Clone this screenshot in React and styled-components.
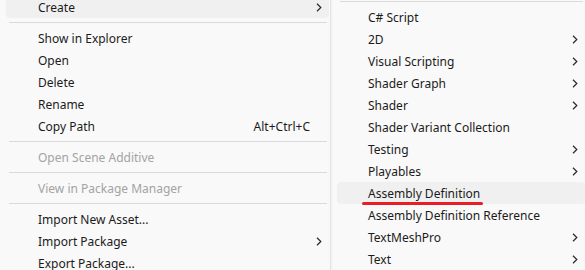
import React from 'react';
import styled, { createGlobalStyle } from 'styled-components';

const GlobalStyle = createGlobalStyle`
  html, body {
    margin: 0;
    padding: 0;
    background: #f9f9f9;
  }
  body {
    font-family: "Noto Sans", "Segoe UI", sans-serif;
    font-size: 12px;
    color: #1b1b1b;
  }
`;

const Screen = styled.div`
  width: 585px;
  height: 270px;
  overflow: hidden;
  display: flex;
  align-items: flex-start;
  background: #f9f9f9;
`;

const Menu = styled.div`
  flex: ${p => (p.$grow ? '1' : 'none')};
  width: ${p => (p.$width ? `${p.$width}px` : 'auto')};
  min-height: 280px;
  margin-top: ${p => p.$offset}px;
  padding-left: 6px;
  padding-right: ${p => p.$padRight}px;
  border-right: ${p => (p.$border ? '1px solid #e3e3e3' : 'none')};
  box-shadow: ${p => (p.$border ? '1px 0 2px rgba(0,0,0,0.04)' : 'none')};
  display: flex;
  flex-direction: column;
  box-sizing: border-box;
`;

const Row = styled.div`
  position: relative;
  flex-shrink: 0;
  height: 22px;
  display: flex;
  align-items: center;
  padding-left: ${p => p.$indent}px;
  padding-right: 7px;
  border-radius: 4px;
  background: ${p => (p.$active ? '#f0f0f0' : 'transparent')};
  color: ${p => (p.$disabled ? '#a3a3a3' : '#1b1b1b')};
  white-space: nowrap;
`;

const Label = styled.span`
  position: relative;
  flex: 1;
`;

const Shortcut = styled.span`
  margin-right: 12px;
`;

const Separator = styled.div`
  flex-shrink: 0;
  height: 1px;
  margin: 4px 2px 4px 3px;
  background: #dadada;
`;

const Mark = styled.span`
  position: absolute;
  left: -6px;
  top: 17px;
  width: 121px;
  height: 3px;
  border-radius: 2px;
  background: #e81d25;
`;

const Chevron = () => (
  <svg width="6" height="9" viewBox="0 0 6 9">
    <polyline points="1,0.8 4.8,4.5 1,8.2" fill="none" stroke="#2a2a2a" strokeWidth="1.2" />
  </svg>
);

const leftItems = [
  { label: 'Create', sub: true, active: true },
  { sep: true },
  { label: 'Show in Explorer' },
  { label: 'Open' },
  { label: 'Delete' },
  { label: 'Rename' },
  { label: 'Copy Path', shortcut: 'Alt+Ctrl+C' },
  { sep: true },
  { label: 'Open Scene Additive', disabled: true },
  { sep: true },
  { label: 'View in Package Manager', disabled: true },
  { sep: true },
  { label: 'Import New Asset...' },
  { label: 'Import Package', sub: true },
  { label: 'Export Package...' },
];

const rightItems = [
  { sep: true },
  { label: 'C# Script' },
  { label: '2D', sub: true },
  { label: 'Visual Scripting', sub: true },
  { label: 'Shader Graph', sub: true },
  { label: 'Shader', sub: true },
  { label: 'Shader Variant Collection' },
  { label: 'Testing', sub: true },
  { label: 'Playables', sub: true },
  { label: 'Assembly Definition', active: true, marked: true },
  { label: 'Assembly Definition Reference' },
  { label: 'TextMeshPro', sub: true },
  { label: 'Text', sub: true },
];

function MenuList({ items, indent }) {
  return items.map((item, i) =>
    item.sep ? (
      <Separator key={i} />
    ) : (
      <Row key={i} $indent={indent} $active={item.active} $disabled={item.disabled}>
        <Label>
          {item.label}
          {item.marked && <Mark />}
        </Label>
        {item.shortcut && <Shortcut>{item.shortcut}</Shortcut>}
        {item.sub && <Chevron />}
      </Row>
    )
  );
}

export default function App() {
  return (
    <>
      <GlobalStyle />
      <Screen>
        <Menu $width={331} $offset={-4} $padRight={1} $border>
          <MenuList items={leftItems} indent={32} />
        </Menu>
        <Menu $grow $offset={-3} $padRight={0}>
          <MenuList items={rightItems} indent={31} />
        </Menu>
      </Screen>
    </>
  );
}
